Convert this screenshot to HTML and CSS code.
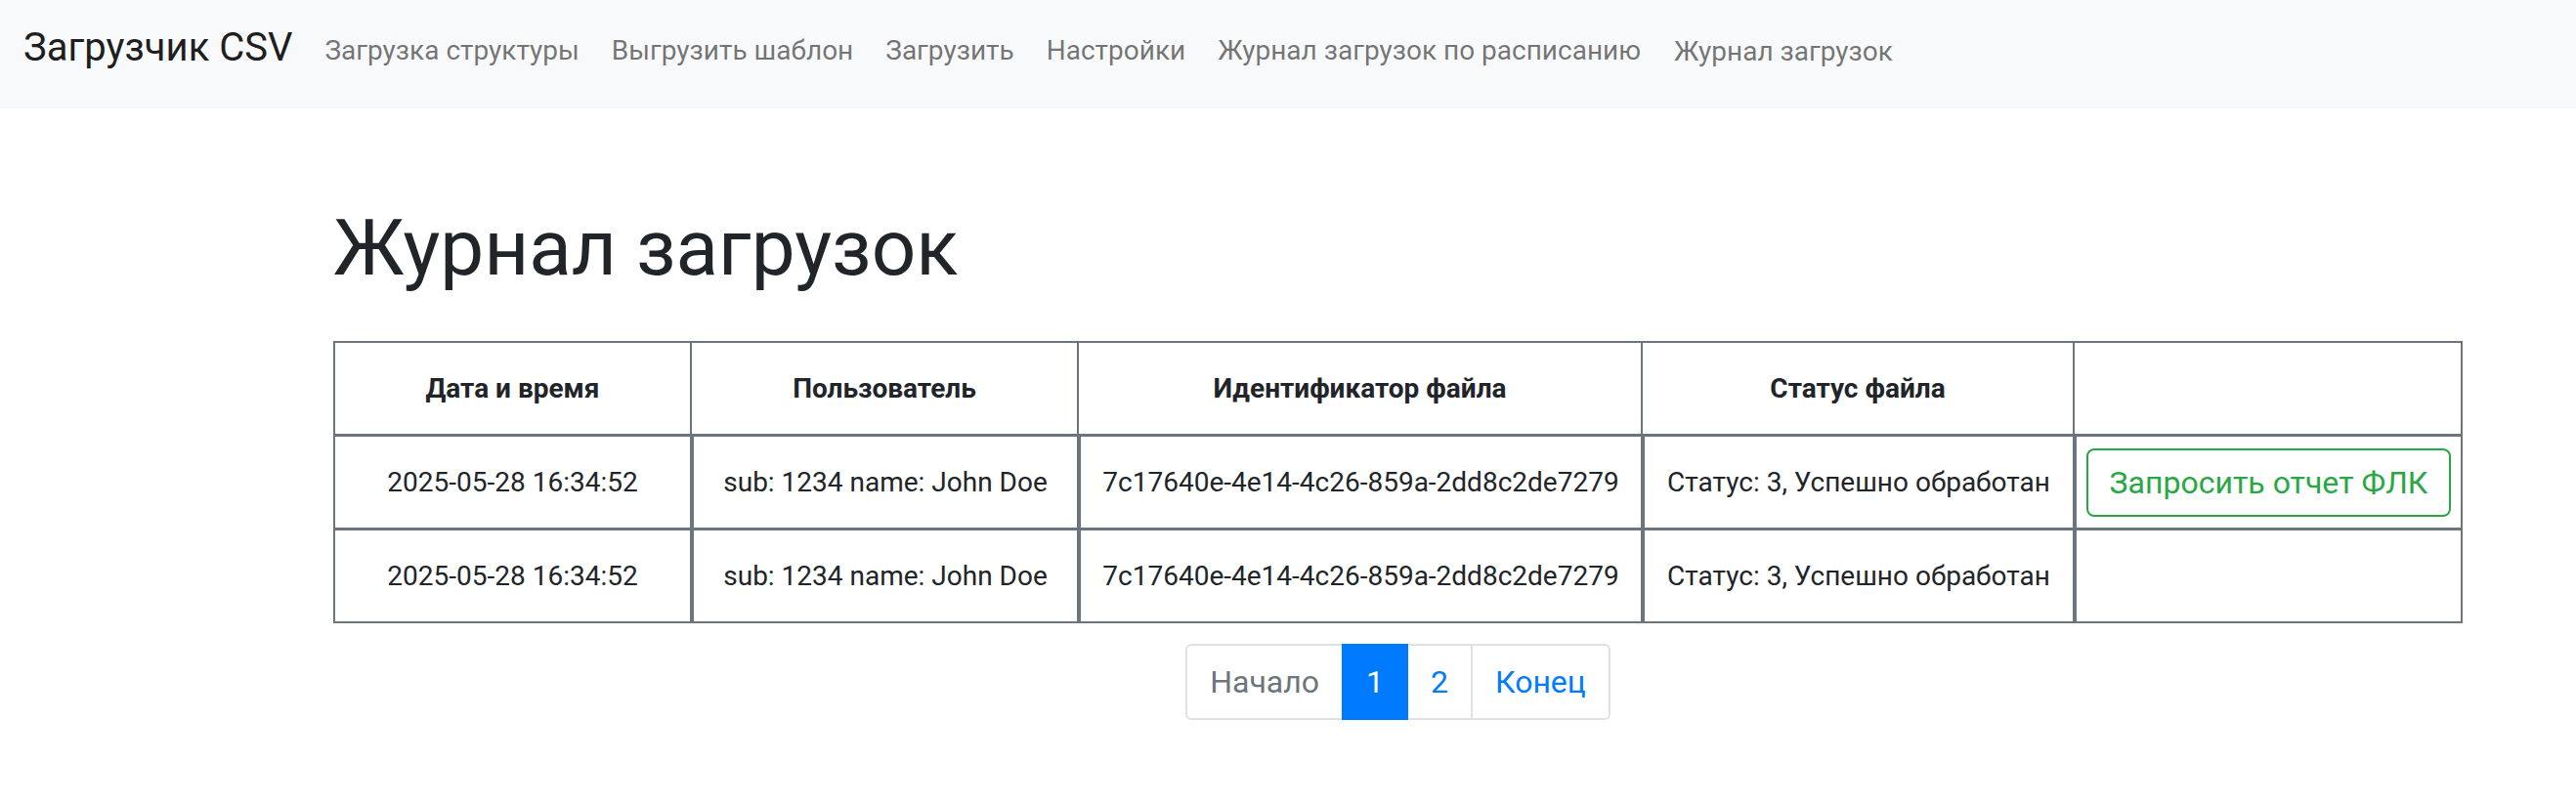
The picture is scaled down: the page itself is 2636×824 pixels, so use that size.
FILE: index.html
```html
<!DOCTYPE html>
<html lang="ru">
<head>
<meta charset="utf-8">
<title>Журнал загрузок</title>
<link rel="stylesheet" href="styles.css">
</head>
<body>
<nav class="navbar">
  <a class="brand" href="#">Загрузчик CSV</a>
  <ul class="nav">
    <li><a class="nav-link" href="#">Загрузка структуры</a></li>
    <li><a class="nav-link" href="#">Выгрузить шаблон</a></li>
    <li><a class="nav-link" href="#">Загрузить</a></li>
    <li><a class="nav-link" href="#">Настройки</a></li>
    <li><a class="nav-link" href="#">Журнал загрузок по расписанию</a></li>
    <li class="nav-last"><a class="nav-link" href="#">Журнал загрузок</a></li>
  </ul>
</nav>
<main class="main">
  <h1 class="title">Журнал загрузок</h1>
  <table class="log-table">
    <thead>
      <tr>
        <th class="col-date">Дата и время</th>
        <th class="col-user">Пользователь</th>
        <th class="col-id">Идентификатор файла</th>
        <th class="col-status">Статус файла</th>
        <th class="col-action"></th>
      </tr>
    </thead>
    <tbody>
      <tr>
        <td>2025-05-28 16:34:52</td>
        <td>sub: 1234 name: John Doe</td>
        <td>7c17640e-4e14-4c26-859a-2dd8c2de7279</td>
        <td>Статус: 3, Успешно обработан</td>
        <td class="cell-action"><button class="btn-outline" type="button">Запросить отчет ФЛК</button></td>
      </tr>
      <tr>
        <td>2025-05-28 16:34:52</td>
        <td>sub: 1234 name: John Doe</td>
        <td>7c17640e-4e14-4c26-859a-2dd8c2de7279</td>
        <td>Статус: 3, Успешно обработан</td>
        <td class="cell-action"></td>
      </tr>
    </tbody>
  </table>
  <div class="pager-wrap">
    <ul class="pager">
      <li class="page disabled"><span>Начало</span></li>
      <li class="page active"><span>1</span></li>
      <li class="page"><a href="#">2</a></li>
      <li class="page"><a href="#">Конец</a></li>
    </ul>
  </div>
</main>
</body>
</html>
```

FILE: styles.css
```css
* { box-sizing: border-box; }
html, body { margin: 0; padding: 0; background: #fff; }
body {
  font-family: Roboto, "Liberation Sans", Arial, sans-serif;
  color: #212529;
}
a { text-decoration: none; }

.navbar {
  display: flex;
  align-items: flex-start;
  height: 111px;
  padding: 19px 24px 0 24px;
  background: #f8f9fa;
}
.brand {
  font-size: 40px;
  line-height: 60px;
  color: rgba(0, 0, 0, 0.9);
  margin-right: 33px;
  white-space: nowrap;
}
.nav {
  display: flex;
  list-style: none;
  margin: 0;
  padding: 0;
  gap: 33px;
}
.nav-link {
  display: block;
  font-size: 28px;
  line-height: 65px;
  color: rgba(0, 0, 0, 0.55);
  white-space: nowrap;
}
.nav-last { margin-top: 1px; margin-left: 1px; }

.main {
  padding: 95px 116px 0 341px;
}
.title {
  font-size: 80px;
  font-weight: 400;
  line-height: 96px;
  margin: 0 0 47px 0;
  color: #212529;
}

.log-table {
  width: 100%;
  table-layout: fixed;
  border-collapse: separate;
  border-spacing: 0;
  font-size: 28px;
  color: #212529;
}
.log-table th,
.log-table td {
  text-align: center;
  vertical-align: middle;
  line-height: 42px;
  padding: 26px 8px 25px 8px;
  border-color: #6c757d;
  border-style: solid;
  white-space: nowrap;
}
.log-table th {
  font-weight: 700;
  border-width: 2px 2px 1px 0;
}
.log-table th:first-child { border-left-width: 2px; }
.log-table td { border-width: 2px 2px 1px 2px; }
.log-table tbody tr:last-child td { border-bottom-width: 2px; }

.col-date { width: 367px; }
.col-user { width: 396px; }
.col-id { width: 577px; }
.col-status { width: 442px; }

.log-table td.cell-action { padding: 0 8px; }
.btn-outline {
  display: inline-block;
  font-family: inherit;
  font-size: 32px;
  line-height: 42px;
  padding: 12px 22px;
  color: #28a745;
  background: transparent;
  border: 2px solid #28a745;
  border-radius: 8px;
  cursor: pointer;
}

.pager-wrap {
  display: flex;
  justify-content: center;
  margin-top: 21px;
}
.pager {
  display: flex;
  list-style: none;
  margin: 0;
  padding: 0;
}
.page {
  font-size: 32px;
  line-height: 38px;
  border: 2px solid #dee2e6;
  margin-left: -2px;
  background: #fff;
}
.page:first-child { margin-left: 0; border-radius: 6px 0 0 6px; }
.page:last-child { border-radius: 0 6px 6px 0; }
.page span,
.page a {
  display: block;
  padding: 18px 23px;
  color: #007bff;
}
.page.disabled span { color: #6c757d; }
.page.active {
  background: #007bff;
  border-color: #007bff;
  z-index: 1;
}
.page.active span { color: #fff; }
```
